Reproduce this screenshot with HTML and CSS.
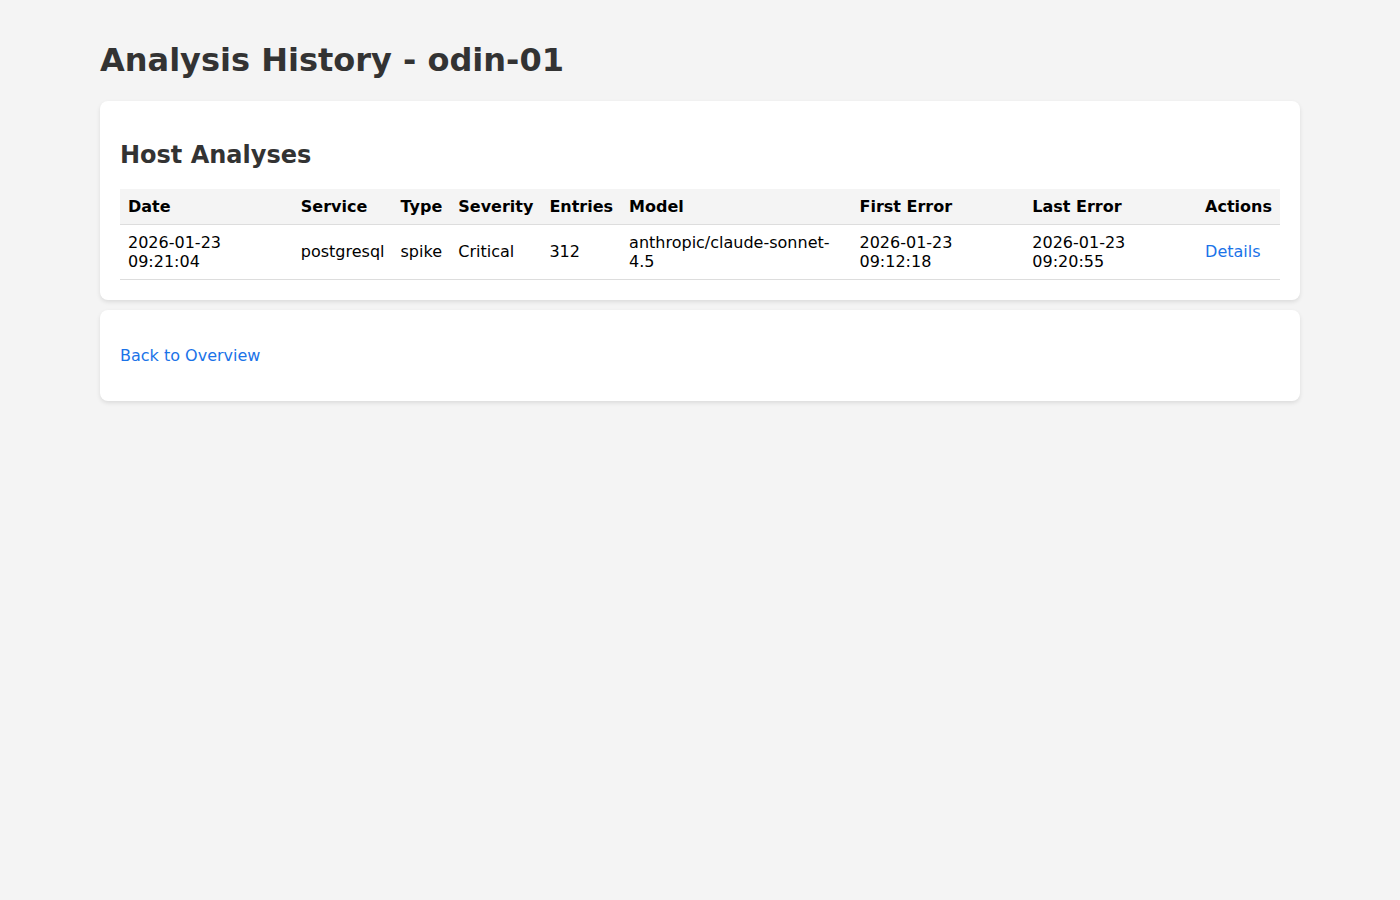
FILE: index.html
```html
<!DOCTYPE html>
<html lang="en">
<head>
  <meta charset="UTF-8">
  <meta name="viewport" content="width=device-width, initial-scale=1.0">
  <title>Analysis History - odin-01</title>
  <link rel="stylesheet" href="styles.css">
</head>
<body>
  <div class="container">
    <h1>Analysis History - odin-01</h1>

    <div class="card">
      <h2>Host Analyses</h2>
      <table>
        <thead>
          <tr>
            <th>Date</th>
            <th>Service</th>
            <th>Type</th>
            <th>Severity</th>
            <th>Entries</th>
            <th>Model</th>
            <th>First Error</th>
            <th>Last Error</th>
            <th>Actions</th>
          </tr>
        </thead>
        <tbody>
          <tr>
            <td>2026-01-23 09:21:04</td>
            <td>postgresql</td>
            <td>spike</td>
            <td>Critical</td>
            <td>312</td>
            <td>anthropic/claude-sonnet-4.5</td>
            <td>2026-01-23 09:12:18</td>
            <td>2026-01-23 09:20:55</td>
            <td><a href="#">Details</a></td>
          </tr>
        </tbody>
      </table>
    </div>

    <div class="card">
      <p><a href="#">Back to Overview</a></p>
    </div>
  </div>
</body>
</html>
```

FILE: styles.css
```css
body {
  background-color: #f4f4f4;
  color: #000;
  font-family: "DejaVu Sans", sans-serif;
  font-size: 16px;
  margin: 0;
  padding: 20px;
}
.container {
  max-width: 1200px;
  margin: 0 auto;
}
h1 {
  color: #333;
  font-size: 32px;
}
h2 {
  color: #333;
  font-size: 24px;
}
a {
  color: #1a73e8;
  text-decoration: none;
}
.card {
  background-color: #ffffff;
  border-radius: 8px;
  box-shadow: 0 2px 4px rgba(0, 0, 0, 0.1);
  padding: 20px;
  margin-bottom: 10px;
}
table {
  width: 100%;
  border-collapse: collapse;
}
th, td {
  padding: 8px;
  text-align: left;
  border-bottom: 1px solid #ddd;
}
th {
  background-color: #f4f4f4;
}
```
